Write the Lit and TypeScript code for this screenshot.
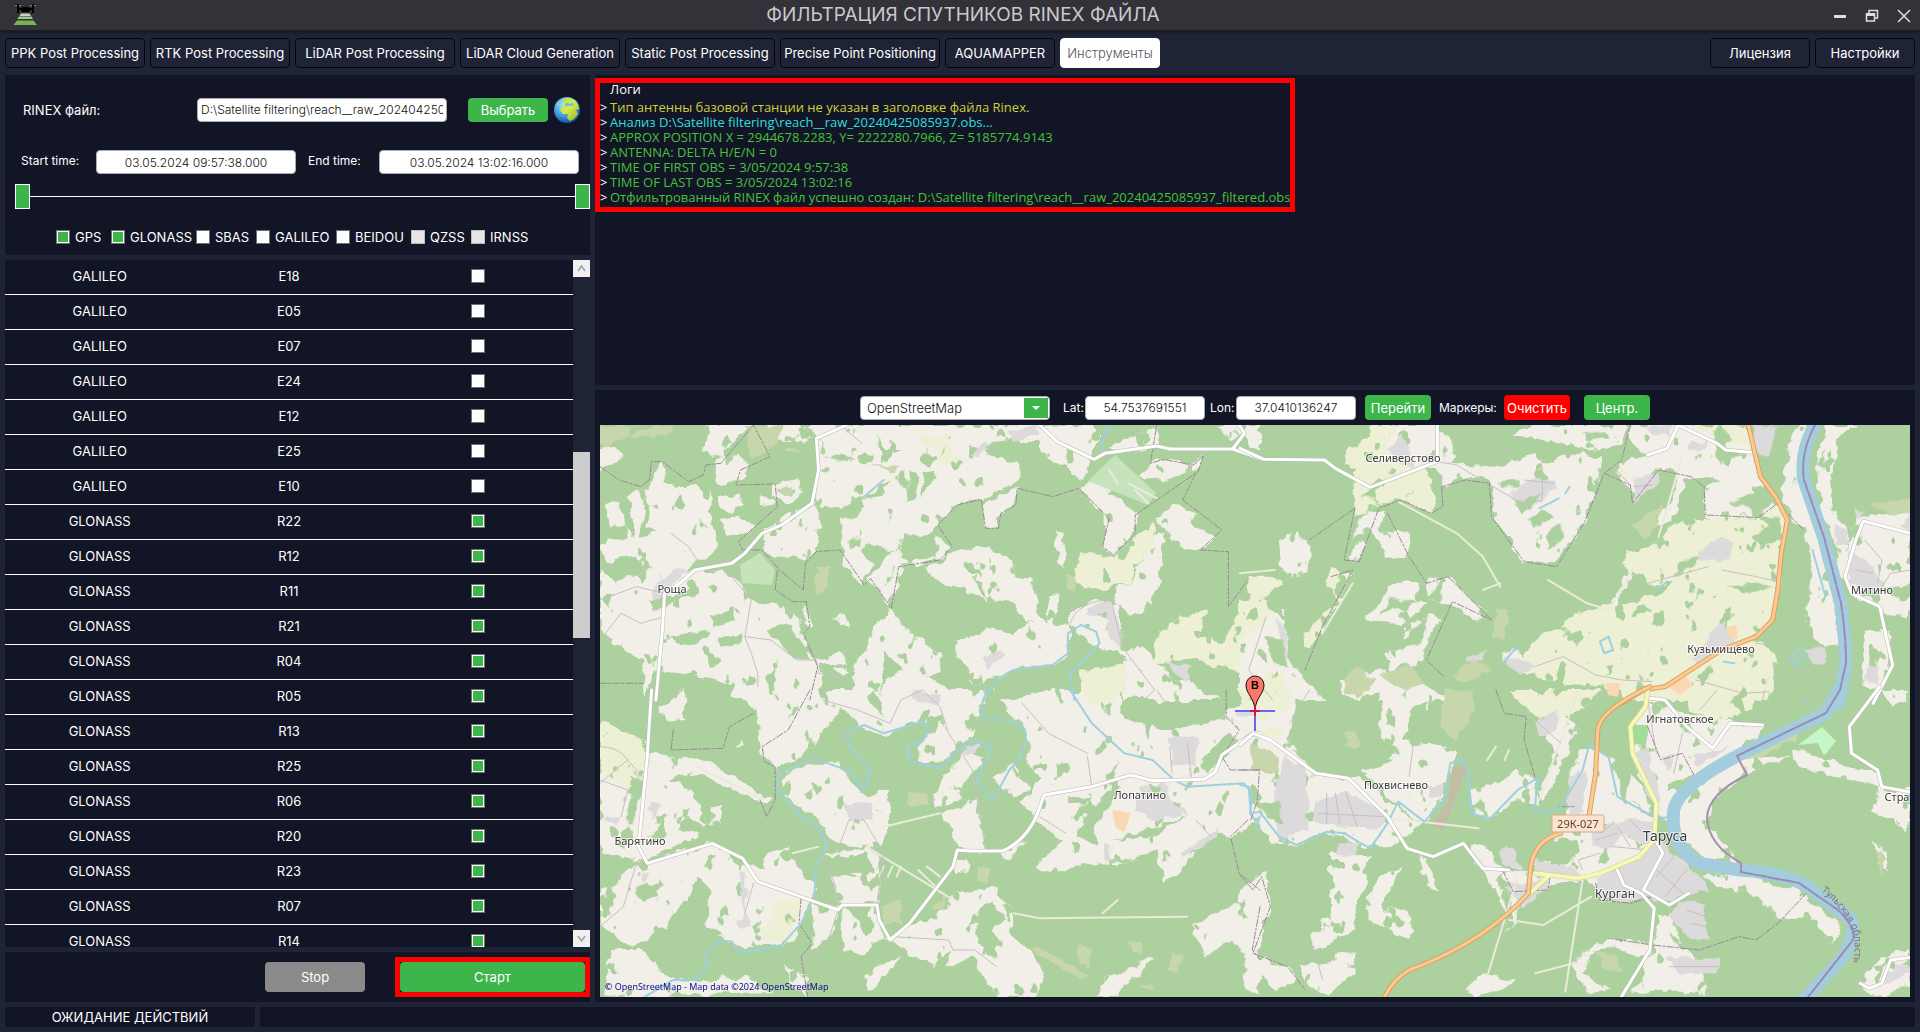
import { LitElement, html, css, svg } from "lit";
import { customElement, state } from "lit/decorators.js";

interface Sheet {
  transform: string;
  land: string;
  farm: string;
  scrub: string;
  built: string;
  wood: string;
  river: string;
  oka?: string;
  track: string;
  ride: string;
  road: string;
  trunk?: string;
  yellow?: string;
  border: string;
}

/* The map is drawn as four adjoining survey sheets, each in its own units. */
const SHEETS: Sheet[] = [
  {
    transform: "translate(-20 -55) scale(.4337 .3333)",
    land: `M46 235L85 230 103 260 60 285 46 300zM290 165L400 165 375 205 330 235 340 255 300 260 285 245 295 200z
      M320 260L370 255 390 290 360 340 340 350 310 330z
      M430 165L960 165 1060 168 1185 165 1200 200 1180 270 1165 320 1120 290 1080 270 1050 215 1010 205 960 215 935 235 955 260 1000 270 1020 320 990 345 930 385 870 400 830 455 820 480 860 540 790 580 740 590 735 520 720 540 668 520 650 540 670 590 650 635 610 580 600 500 600 440 650 440 650 390 700 370 720 330 660 380 600 410 560 415 520 400 545 390 550 250 545 205 480 220 430 200z
      M110 370L160 355 185 280 200 330 240 350 300 360 295 420 305 450 315 520 300 545 250 600 310 600 350 620 395 690 445 700 500 730 520 840 540 870 610 850 620 910 555 880 550 990 350 990 350 930 170 900 150 990 145 880 100 830 70 830 60 780 46 740 46 600 85 640 150 600 130 560 60 570 50 530 110 490 100 470 60 460 60 400 90 385 100 470 130 500z
      M420 490L470 440 540 400 555 440 545 490 550 540 500 570 430 550zM320 380L370 370 375 410 345 430 320 415zM415 370L440 375 450 400 425 410z
      M440 350L500 330 510 370 480 400 455 390zM715 545L735 530 740 600 720 715 665 630zM318 450L360 440 400 460 390 495 340 490z
      M640 890L680 770 718 720 765 800 825 850 830 900 800 925 870 970 860 990 630 990 620 930z
      M800 590L860 550 920 530 970 545 1005 580 1000 620 1040 625 1050 680 1065 740 1030 760 1000 700 960 690 900 665 850 650 810 620z
      M870 810L940 770 1000 790 1060 740 1100 770 1130 760 1125 860 1080 885 1020 890 960 920 920 940 870 870z
      M1000 355L1010 355 1000 400 965 440 960 475 935 475 930 400zM1150 355L1200 320 1220 370 1280 430 1280 490 1230 555 1205 530 1215 440z
      M1285 315L1330 270 1400 280 1438 260 1430 290 1350 330 1300 335zM1210 240L1270 200 1335 170 1330 230 1240 250z
      M1335 440L1380 405 1420 430 1410 460 1460 500 1450 530 1400 540 1350 490zM1270 640L1340 480 1350 520 1330 640 1320 700 1270 740 1230 690 1240 650z
      M1130 730L1190 690 1240 700 1250 780 1250 850 1190 830 1130 760zM1075 680L1105 670 1100 740 1085 780zM1100 510L1110 475 1120 560 1120 600 1100 580z
      M1250 830L1300 840 1380 930 1480 990 1250 990zM1475 165L1530 165 1535 190 1510 215 1480 190zM1540 165H1568V240L1540 235z
      M575 740L610 735 625 770 600 765zM515 700L530 730 530 770 515 765z`,
    farm: `M1150 550L1230 560 1330 450 1330 520 1280 600 1270 640 1170 660 1145 640zM1330 790L1400 740 1440 720 1430 800 1480 820 1568 640V910L1480 890 1430 870 1325 880z
      M1150 900L1250 880 1250 960 1230 990 1155 990zM770 190L840 200 875 260 850 300 820 250z`,
    scrub: `M46 165L120 165 110 200 60 235 46 215zM115 190L180 165 215 170 200 195 120 205zM385 170L470 165 460 210 400 270 390 260zM470 235L500 235 512 250 480 250zM545 585L572 585 568 670 542 675zM455 350L490 350 485 375 460 372zM660 285L735 290 725 310 700 295zM1120 615L1140 620 1145 665 1125 660z`,
    built: `M1170 705L1225 695 1250 800 1245 830 1220 800 1210 730 1170 740zM175 640L230 595 255 600 215 640 180 720 165 715zM900 255L935 220 945 230 920 258zM985 190L1050 165 1060 190 1000 215zM1350 880L1410 885 1400 930 1370 905z
      M925 870L970 840 980 860 935 890z`,
    wood: `M205 800L300 780 290 810 230 820zM300 740L350 720 360 750 310 770zM320 800L375 795 370 820 325 830zM430 780L480 760 520 840 530 870 490 865zM160 695L270 650 280 665 170 720zM150 400L165 405 150 470 175 490 135 500zM685 195L700 240 740 240 690 280zM790 300L820 310 785 390zM760 300L780 305 770 390 755 395zM740 500L820 490 820 560 745 570z
      M910 610L930 640 940 690 920 660zM560 880L610 880 610 890 560 890zM700 840L740 900 700 930 690 980zM1180 850L1240 840 1260 870 1200 900zM1000 890L1110 890 1120 940 1000 990 930 990zM505 440L515 445 500 480zM555 200L570 260 640 260 600 280 560 250z`,
    river: `M1225 165Q1200 200 1205 245M930 990Q950 930 1000 900L1090 885 1125 850 1125 790 1155 765 1190 785 1198 820 1165 870 1130 910 1140 990M655 380L700 330`,
    track: `M330 590L395 690 380 800 395 850 410 910 410 950M46 690L130 650 195 670M46 810L95 730 140 760 195 740M210 490L250 530 270 570 350 580M380 800L440 810 500 870 545 870 550 910 600 920 620 940M1130 760Q1150 690 1225 690L1250 830 1325 960 1300 990M600 165L650 220`,
    ride: `M550 250L545 380M1220 300L1240 340M1265 340L1330 385M1280 360L1310 400M740 590L735 540`,
    road: `M615 165L545 205 550 300 535 400 465 465 420 490 380 550 350 580 265 600 230 640 195 670 190 780 175 990M1060 165L1100 215 1185 268 1210 250 1330 228 1360 237 1505 237 1568 265M1505 237L1532 190 1520 165`,
    border: `M46 290L90 330 140 350 160 330 165 275 190 275 250 335 285 315 290 285 325 280 400 165 438 260 370 300 360 345 450 342 455 410 365 515 375 540 420 540 460 600 515 660 520 580 545 545 600 540 655 645 670 625 718 715 735 590 830 570 858 530 825 465 870 405 925 388 935 475 965 475 970 430 1005 405 1008 355 1090 380 1150 355 1220 445 1205 530 1230 555 1280 490 1280 435 1425 305 1437 258 1415 285 1345 268 1315 280 1330 165M455 600L450 660 490 695 522 695 530 770 515 790 548 890 530 990M1390 390L1480 480 1430 540 1495 545 1495 710 1540 630M46 940H145M1420 310L1390 390`,
  },
  {
    transform: "translate(640 -55) scale(.4337 .3333)",
    land: `M0 165L15 200 50 235 30 215 0 200zM350 165L455 165 470 200 495 215 495 265 470 290 400 280 340 230zM455 280L530 285 560 320 510 330 470 350z
      M530 285L600 290 680 240 700 280 790 250 840 265 820 340 795 455 750 540 720 585 655 575 620 510 580 430 575 340z
      M625 190L660 165 890 165 885 200 850 245 800 235 720 215z
      M900 165L1160 165 1185 245 1200 320 1230 380 1250 430 1190 440 1070 435 1075 350 1100 320 1040 330 960 290 910 400 900 340 860 300 905 260 940 260 900 220z
      M1245 360L1285 165 1310 165 1295 260 1300 360 1350 560 1370 700 1385 830 1340 830 1300 760 1320 620 1300 480 1270 440 1260 400z
      M1350 165L1420 165 1385 200 1360 330 1365 420 1400 480 1400 560 1390 620 1360 480 1335 380 1330 280z
      M1420 440L1545 420 1545 640 1480 660 1545 700V740L1480 720 1400 660 1390 600zM1440 790L1500 780 1500 870 1470 960 1430 950z
      M85 510L130 490 160 560 165 600 120 620 90 590zM290 420L330 430 320 480 390 500 380 560 340 570 325 520 290 480 275 570 250 565z
      M285 740L370 630 410 640 410 680 440 700 370 770zM430 630L480 620 570 730 540 760 490 700 440 680zM380 780L440 730 460 760 430 810 420 870 350 900 330 850 380 830z
      M0 720L100 720 110 860 150 930 200 990 0 990zM230 920L340 900 500 990 230 990zM960 470L1020 300 1030 310 1000 450zM900 600L910 600 860 715 850 710z
      M600 840L650 850 690 900 660 910 610 880z`,
    farm: `M310 165L350 165 340 230 400 280 430 270 430 300 450 400 440 425 370 390 320 400 270 430 258 350 265 300 240 290 245 240 290 205zM1030 165L1170 165 1185 225 1120 215z
      M940 530L1010 450 1110 435 1190 445 1250 400 1262 460 1245 560 1240 660 1225 750 1180 800 1240 850 1220 990 880 990 880 960 690 930 650 850 700 790 800 720 830 710 960 680 1000 640 940 640 880 580 890 540z
      M200 600L260 610 190 790 150 830 145 790 230 690 200 640zM15 620L80 620 95 640 60 690 15 670zM0 690L70 690 60 760 0 800zM60 900L100 900 120 990 60 990zM865 280L900 300 895 320 865 310z`,
    scrub: `M590 715L620 725 610 800 580 810zM235 930L270 890 310 930 280 980 240 970zM320 920L390 880 420 940 380 960zM490 920L540 870 580 900 520 940zM910 465L980 390 940 510zM1450 400L1545 390V430L1480 425z`,
    built: `M905 320L960 310 965 340 910 400zM930 165L1000 165 985 200 950 190zM1180 165L1240 165 1220 260 1190 240zM1040 220L1080 210 1060 250 1035 240zM1405 540L1440 560 1480 640 1470 680 1440 660 1405 640zM1090 780L1115 755 1130 800 1150 830 1110 850 1060 890 1040 870z
      M340 240L370 190 395 250 400 290 370 280zM620 370L660 330 725 325 725 360 695 390 630 392zM1055 545L1110 500 1130 520 1125 570 1060 570zM605 870L645 860 680 890 650 910zM1300 840L1350 830 1350 880 1320 880zM1370 460L1400 480 1400 530 1375 520zM1545 430V480L1520 470z
      M1440 890L1470 885 1470 940 1440 930zM80 740L110 800 110 860 95 850zM520 860L570 845 560 870 520 875zM1415 410L1440 430 1425 445z`,
    wood: `M1250 560L1310 560 1310 700 1280 760 1240 730zM1130 400L1240 330 1250 380 1200 430 1240 440 1250 500 1200 540 1180 500 1220 470 1170 410zM280 380L300 355 315 390zM640 400L700 370 650 430zM660 450L700 420 720 440 680 470zM700 500L740 460 750 500 710 540zM600 340L640 330 640 350 600 350zM470 620L460 700 430 690zM1050 580L1000 620 1010 580 1060 560zM1120 650L1200 640 1230 650 1180 670zM720 960L740 870 755 890 730 985zM320 740L340 690 420 690 380 720 350 710zM400 780L430 740 420 820 360 840z
      M60 800L100 810 110 900 80 880zM790 190L840 180 850 200 800 210zM1100 160L1130 200 1110 290 1090 220z`,
    river: `M830 815L850 800 860 840 840 850zM1270 860L1290 835 1300 860 1280 890zM690 415L735 385M750 370L760 350M605 880L640 830M960 660L985 635M1115 875L1140 880M1320 540L1350 680`,
    oka: `M1325 165Q1290 250 1300 330L1345 500 1385 700Q1395 800 1397 880L1380 1000`,
    track: `M455 275L500 285 570 340 640 393 697 393 697 325M680 890L745 860 820 915 880 930 950 935M1110 600L1190 620 1240 635M940 640L1080 590M1190 820L1270 830 1280 900 1380 915M1050 930L1160 970 1220 965M1475 660L1500 610 1545 600M75 990L20 900 60 740M860 290L900 345M1440 510L1480 570 1470 640M655 330L725 340M910 350L950 345M1420 600L1460 610`,
    ride: `M365 395L500 490 560 560 600 650M0 610L80 600M710 630L800 700M905 600L855 715M600 640L560 660M800 700L850 720M260 640L190 790M1020 260L965 500`,
    road: `M0 235L55 268 195 270 220 295 300 352 455 275 455 165M1010 165L1100 220 1120 240 1190 248M1010 165L985 235 940 255M1545 490L1437 453 1420 510 1395 620 1410 670 1475 710 1490 800 1505 885 1460 1000`,
    trunk: `M1172 165L1200 320 1235 380 1262 450 1248 550 1240 660 1228 750 1190 800 1110 840 980 950 930 960 880 1000`,
    border: `M265 415L160 510M265 415L240 570 275 575 320 415 370 390 440 430 468 410 465 350 520 330 575 340 580 440 655 575 730 590 795 455 840 310 880 270 900 165M840 310L900 345 905 400 965 300 1040 320 1070 350 1073 435 1195 443 1240 400 1300 480M340 430L390 560 430 640 480 620 580 750 490 695 430 870 470 920M210 620L260 600 190 770 150 900`,
  },
  {
    transform: "translate(-20 265) scale(.4337 .3333)",
    land: `M360 0L930 0 925 60 905 140 870 170 830 80 790 90 700 130 650 110 600 60 545 160 510 200 450 240 420 190 400 60z
      M46 230L120 180 300 215 440 325 420 340 270 250 210 260 270 330 300 420 200 480 140 520 46 480z
      M46 560L150 520 305 460 360 520 410 540 480 500 545 600 530 640 490 760 370 780 330 740 280 700 310 600 230 640 200 720 120 770 46 700z
      M70 780L140 780 200 860 280 870 390 860 440 910 60 920zM470 260L540 215 600 215 620 270 660 320 715 290 715 430 690 470 600 470 530 370 470 320z
      M560 500L600 490 670 470 690 500 690 640 600 640 580 560 640 560zM530 640L600 650 580 740 540 770zM610 650L640 700 680 650 700 740 650 790 600 780z
      M775 180L830 100 880 160 830 225 780 200zM820 290L890 180 930 200 900 260 870 330 820 350zM840 370L910 330 935 480 870 480 860 420z
      M950 0L1240 0 1260 80 1360 130 1440 100 1500 60 1568 0V280L1550 400 1500 440 1460 430 1400 520 1350 570 1330 480 1250 520 1200 510 1120 540 1090 550 1050 520 1110 450 1060 400 1020 340 1060 270 1030 200 1030 130z
      M850 620L950 590 1000 660 990 740 1040 770 1070 850 1050 920 960 920 900 800 850 830zM700 740L850 660 850 780 820 830 760 790zM1410 710L1568 600V800L1500 760 1440 790zM1200 880L1330 790 1280 860 1240 920 1200 920z
      M300 350L325 345 320 400 300 395zM360 170L375 150 380 165zM970 490L1030 450 985 505zM420 500L480 470 480 500 430 540zM660 850L700 820 740 800 700 860 660 900zM1520 760L1568 700V920L1540 900z
      M470 830L520 860 530 920 490 890zM865 520L895 510 895 550 870 545zM185 50L240 0 240 90 200 95zM950 260L1000 230 1040 290 1000 320z`,
    farm: `M60 100L155 160 165 220 120 300 46 240 46 100zM450 640L520 620 480 760 415 750zM1160 0L1240 0 1220 50 1180 40z`,
    scrub: `M750 310L800 305 810 345 755 345zM700 650L740 630 740 700 700 705zM810 640L845 620 840 660 815 655zM920 530L950 540 940 580 918 570zM1145 760L1180 780 1175 830 1150 820zM1265 750L1300 750 1300 790 1270 785zM1360 790L1390 790 1380 850 1355 840zM1290 890L1320 880 1320 910zM1040 780L1060 770 1170 855 1160 870zM1545 170H1568V230L1550 235z`,
    built: `M610 340L675 335 675 380 620 390zM1290 290L1350 280 1370 350 1400 370 1320 390 1280 360zM1360 140L1425 140 1420 230 1365 220zM60 375L90 390 85 405 60 390zM160 335L185 345 165 390zM370 540L385 545 380 660 395 710 360 705 375 680zM1210 460L1225 465 1225 510 1212 510zM1380 490L1475 415 1470 440 1390 505zM765 5L830 20 825 45 770 30zM1510 60L1550 65 1550 80 1515 78zM140 540L160 550 150 570z
      M880 180L920 165 920 180 890 195z`,
    wood: `M120 260L150 270 120 400 105 400zM160 440L195 380 200 440 170 460zM220 420L240 370 300 420 260 430zM130 590L155 570 180 610 150 630 130 620zM640 700L660 660 680 700 660 740zM1160 390L1240 270 1250 290 1190 400 1190 470 1150 440zM1430 210L1500 120 1520 160 1470 220 1440 250zM1300 100L1320 90 1310 150zM560 500L620 500 660 490 680 550 570 555zM910 680L950 630 980 690 950 720 960 800 920 760zM680 0L700 90 680 60 660 20zM240 660L270 560 300 600 290 690 250 700zM480 270L475 320 460 300zM1310 280L1340 290 1330 320zM1130 320L1175 325 1165 345 1130 340zM1230 450L1330 410 1400 370 1320 440z
      M46 540L130 500 80 590 46 600z`,
    river: `M940 0Q915 60 935 90Q1010 80 1028 130Q1030 190 990 240L950 335 915 270 940 200 945 165 900 150 850 210 830 235 760 215 755 165 790 155 805 115 790 95 700 130 655 105 615 130 620 165 670 240 655 300 625 245 540 205 460 250 455 300 510 380 550 410 570 470 545 520 540 620 510 700 465 765 370 790 350 755 320 750 285 800 295 830 265 870 215 870 150 920M1130 0L1180 100 1255 190 1320 210 1370 270 1400 290 1530 280 1550 310 1545 370 1568 410`,
    track: `M46 170Q90 170 110 210L150 270M46 280L110 210M95 380L110 300 46 270M130 520L100 650 46 710M400 580L380 670M550 0L560 30 640 60 715 100 740 30 790 0 830 50 850 130 905 240 935 475M560 500L590 590 590 640M600 460L620 390 655 390 700 490 685 640M595 660L570 760 520 830M1060 380L1120 430M1170 200L1180 290M1020 40L1080 130 1170 190M1360 170L1365 250M1400 160L1410 260M1330 0L1360 60 1370 130M1420 390L1455 440M720 740L850 750 860 780 910 780 960 830`,
    ride: `M270 230L425 330M660 470L855 625M1000 670L1060 685 1400 680M1205 670L1240 630M700 410L830 370M490 490L550 470M800 530L830 560M780 540L820 590M700 530L690 560M720 530L710 560M740 530L730 560`,
    road: `M165 0L155 200 135 470 155 520 305 460 375 505 410 575 520 625 595 660 605 645 685 645 690 690 715 750 760 700 860 530 870 480 900 483 975 483Q1030 450 1055 370L1070 315 1180 290 1270 255 1320 272 1440 268 1465 245 1480 195 1545 135 1568 130`,
    border: `M530 0L480 120 420 170 425 215 450 230 450 330 430 380 415 330M215 120L210 180 330 175 345 110 400 70M510 620L505 700 535 760 510 800 525 920M1490 0L1490 80 1520 120 1480 200 1500 240 1568 240M1540 390L1500 440 1520 550 1568 600M1568 650L1550 780 1568 810`,
  },
  {
    transform: "translate(640 265) scale(.4337 .3333)",
    land: `M0 140L100 160 180 250 280 270 350 340 420 400 350 470 300 475 200 430 130 470 70 450 30 400 0 330zM20 0L150 0 110 120 130 180 40 150 0 130V20z
      M330 20L460 0 400 130 430 160 500 190 485 220 470 320 420 395 360 340 300 260 270 240 370 190 320 140z
      M530 300L600 280 640 230 680 270 690 350 640 330 570 390 540 370zM720 440L760 350 760 240 800 170 860 200 880 320 960 390 960 450 1000 520 900 560 850 600 790 570 700 600 640 620 600 540 650 540 690 560 700 520 780 510 770 450z
      M700 100L740 50 780 120 750 200 700 330 690 300 720 220zM940 30L1040 80 1170 100 1210 110 1150 180 1060 260 1000 340 990 400 960 350 910 240 900 120z
      M1060 280L1150 200 1270 200 1240 215 1170 250 1090 330 1080 400 1150 520 1070 500 1000 440 1000 340zM1275 180L1400 225 1460 240 1490 300 1545 300V420L1460 365 1470 290 1350 260 1280 220z
      M1060 560L1150 545 1290 600 1380 700 1370 760 1330 700 1230 680 1200 620 1110 590zM960 670L1000 670 1010 760 1070 840 1080 905 900 905 950 780zM1460 450L1490 490 1500 540 1475 520z
      M1440 850L1500 780 1545 770V870L1480 920 1430 900zM0 600L60 540 70 680 0 740zM20 820L60 800 130 860 80 900zM210 480L300 500 260 720 180 740 210 650zM290 650L320 560 370 530 340 640 395 680 390 750 310 700z
      M420 500L465 600 450 600 410 540zM140 830L270 790 270 840 200 920 150 880zM520 900L560 850 640 870 600 900 550 920zM770 820L850 740 940 760 940 800 850 770 800 800 790 850 850 900 800 905zM530 480L560 470 600 530 600 600 640 610 640 700 610 720 600 620 560 540z
      M160 730L250 690 200 780 160 780zM1370 820L1400 780 1350 880 1340 910zM1480 0H1545V20L1500 60zM900 250L930 300 950 370 890 330z`,
    farm: `M0 0L130 0 110 60 60 90 0 60zM1030 0L1210 0 1180 60 1100 100 1040 70zM620 0L830 0 800 50 740 80 690 90zM20 110L60 120 110 110 90 150 40 150z`,
    scrub: `M470 0L530 0 540 60 500 150 460 110zM245 110L275 105 270 170 245 175zM25 160L90 200 80 250 30 240zM820 780L870 800 880 840 840 830zM1150 210L1290 120 1280 150 1180 210zM1465 480L1485 500 1480 570z`,
    built: `M100 200L150 230 160 420 90 450 75 350zM170 340L240 305 340 370 320 420 170 400zM815 420L900 380 950 400 960 450 1050 540 1080 600 1010 620 990 640 940 620 880 640 820 610 820 570 870 520 910 500 940 470 880 430 850 480 810 460zM670 510L770 530 780 560 680 555zM1010 630L1070 640 1080 750 1030 740 990 680zM980 800L1100 810 1100 850 1020 850z
      M910 190L940 170 970 340 940 320zM680 90L730 60 730 120 690 140zM970 200L1000 190 990 240zM600 480L630 470 650 540 610 530zM600 590L710 560 710 590 650 655 630 600zM230 460L270 460 270 500 220 490zM440 290L465 285 460 320 440 315zM760 260L800 240 790 370 760 370zM1040 200L1130 170 1060 230zM0 60L40 60 30 80 0 78z
      M1480 860L1510 820 1545 830V850L1490 880z`,
    wood: `M50 340L90 330 100 400 60 380zM200 60L330 0 310 110 240 130zM390 60L430 40 420 170 380 150zM900 105L940 105 935 165 897 160zM990 280L1050 255 1040 280 985 300zM330 620L370 550 360 640 330 670zM215 510L240 510 240 535 215 535zM720 490L740 500 735 530 715 525zM430 440L470 430 460 465 430 460zM530 350L560 330 570 370zM150 210L290 190 360 210 290 240 160 240z`,
    river: `M0 285L20 290 25 370 45 365 90 440 130 465 200 425 240 430 300 475 340 400 365 335 425 395 470 330 485 220 510 205 525 240 535 370 575 388 640 300 685 265 680 365 735 360 790 240 805 165 850 200 870 320 960 385 1000 380M1295 30L1305 35M155 160L158 165M45 380L40 410`,
    oka: `M1385 -10L1350 70 1150 195Q1010 290 1000 360Q990 470 1060 520L1150 540Q1280 550 1330 610L1410 690Q1420 770 1370 830L1300 930`,
    track: `M1000 250L1020 130M940 30L960 190M1060 60L1100 0M1190 110L1210 0M115 100L160 0M200 310L200 400M220 310L230 400M245 310L270 410M180 370L330 380M960 540L1030 620M1000 500L960 560M1030 540L980 620M870 410L900 470M900 390L930 430M860 470L940 480M1030 660L1075 680M1040 700L1075 710M990 830L1100 830M680 90L740 160M830 430L860 400M820 450L870 430M400 160L390 260M790 540L780 510 830 490M80 740L170 770 190 870`,
    ride: `M780 0L690 330M640 560L570 860M620 690L700 705 810 620M790 570L750 905M770 820L680 850M345 385L550 415M560 520L530 480M590 170L570 210M620 180L610 210`,
    road: `M0 165L30 130 70 150 175 250 250 265 340 380 385 475 445 500 515 460 560 535 620 540M945 25L980 30 1030 110 1090 175 1130 100 1205 105M870 540L885 585 925 610 955 655 945 780 875 930M960 455L975 490 930 600 990 645 1035 610M1475 -10L1405 110 1410 190 1470 240 1480 290 1560 310M1430 880L1450 895 1480 880 1500 810 1560 800`,
    trunk: `M945 -10Q830 60 825 120L820 250 805 375M740 430Q680 450 670 530L665 610Q560 760 390 840Q350 870 330 930`,
    yellow: `M940 0L935 50 900 110 905 190 960 340 955 450 920 500 830 550 780 565 680 550M710 560L660 620`,
    border: `M590 0L610 70 660 80 655 150 680 260M1310 605L1240 700 1190 750 1150 740 1060 780 950 765 850 745M0 555L30 600 50 560 70 650 30 790 110 830 150 900M940 110L970 210 1020 190 1055 275M0 240L45 240 40 330 25 390M735 350L770 350M605 540L630 605 710 600 715 560M820 580L830 630 900 640 950 620M1060 270L1145 210`,
  },
];

const PLACES: [string, number, number, number][] = [
  ["Роща", 72, 168, 11],
  ["Селиверстово", 803, 37, 11],
  ["Митино", 1272, 169, 11],
  ["Кузьмищево", 1121, 228, 11],
  ["Игнатовское", 1080, 298, 11],
  ["Похвиснево", 796, 364, 11],
  ["Лопатино", 540, 374, 11],
  ["Барятино", 40, 420, 11],
  ["Таруса", 1065, 416, 14],
  ["Курган", 1015, 473, 12],
  ["Стра", 1297, 376, 11],
];

@customElement("survey-map")
export class SurveyMap extends LitElement {
  static styles = css`
    :host { display: block; position: relative; overflow: hidden; background: #add19e; }
    .canvas { display: block; width: 100%; height: 100%; }
    path { vector-effect: non-scaling-stroke; }
    .land { fill: #f2efe9; }
    .farm { fill: #eef0d5; }
    .scrub { fill: #c8d7ab; }
    .built { fill: #dcdada; }
    .wood { fill: #add19e; }
    .line { fill: none; stroke-linejoin: round; stroke-linecap: round; }
    .river { stroke: #9fd0df; stroke-width: 2; fill: none; }
    .oka { stroke: #a3cddd; stroke-width: 13; }
    .okaline { stroke: #9a8bb5; stroke-width: 2; stroke-dasharray: 12 2; }
    .track { stroke: #c5bfc1; stroke-width: 1; }
    .ride { stroke: #e9ebdc; stroke-width: 2; }
    .casing { stroke: #bcb8b4; stroke-width: 4; }
    .road { stroke: #ffffff; stroke-width: 3; }
    .trunkcase { stroke: #d9a066; stroke-width: 5; }
    .trunk { stroke: #fbcb90; stroke-width: 3; }
    .yellowcase { stroke: #c9cc94; stroke-width: 5; }
    .yellow { stroke: #f6f8b4; stroke-width: 4; }
    .border { stroke: #9a8898; stroke-width: 1; stroke-dasharray: 7 2 2 2; }
    .limit { stroke: #a98fb0; stroke-width: 2; }
    .place { font-family: "Noto Sans", sans-serif; fill: #3c3c3c; stroke: rgba(255, 255, 255, 0.7); stroke-width: 2; paint-order: stroke; text-anchor: middle; }
    .region { font-family: "Noto Sans", sans-serif; font-size: 10px; fill: #80708c; }
    .shield { fill: #f8e4cf; stroke: #dba98c; }
    .shieldtext { font-family: "Noto Sans", sans-serif; font-size: 11px; fill: #5c4630; text-anchor: middle; }
    .pinletter { font-family: "Liberation Sans", sans-serif; font-size: 11px; font-weight: 700; text-anchor: middle; }
    .credit { position: absolute; left: 5px; bottom: 3px; font: 9px/15px "Open Sans", sans-serif; color: #00008b; white-space: nowrap; }
  `;

  private sheetLand(s: Sheet) {
    return svg`<g transform=${s.transform}>
      <path class="land" d=${s.land}></path><path class="farm" d=${s.farm}></path>
    </g>`;
  }

  private sheetCover(s: Sheet) {
    return svg`<g transform=${s.transform}>
      <path class="scrub" d=${s.scrub}></path><path class="built" d=${s.built}></path><path class="wood" d=${s.wood}></path>
    </g>`;
  }

  private sheetLines(s: Sheet) {
    return svg`<g transform=${s.transform}>
      <path class="line ride" d=${s.ride}></path><path class="line track" d=${s.track}></path>
      <path class="line border" d=${s.border}></path><path class="line river" d=${s.river}></path>
      <path class="line oka" d=${s.oka ?? ""}></path>
      <path class="line casing" d=${s.road}></path><path class="line road" d=${s.road}></path>
      <path class="line yellowcase" d=${s.yellow ?? ""}></path><path class="line yellow" d=${s.yellow ?? ""}></path>
      <path class="line trunkcase" d=${s.trunk ?? ""}></path><path class="line trunk" d=${s.trunk ?? ""}></path>
    </g>`;
  }

  render() {
    return html`
      <svg class="canvas" viewBox="0 0 1310 572" preserveAspectRatio="xMidYMid slice" role="img" aria-label="OpenStreetMap">
        <defs>
          <filter id="coast" filterUnits="userSpaceOnUse" x="0" y="0" width="1310" height="572" color-interpolation-filters="sRGB">
            <feTurbulence type="fractalNoise" baseFrequency=".06" numOctaves="3" seed="7" result="n"></feTurbulence>
            <feDisplacementMap in="SourceGraphic" in2="n" scale="14" xChannelSelector="R" yChannelSelector="G" result="shape"></feDisplacementMap>
            <feTurbulence type="fractalNoise" baseFrequency=".06 .045" numOctaves="3" seed="21" result="m"></feTurbulence>
            <feColorMatrix in="m" values="0 0 0 0 .678  0 0 0 0 .82  0 0 0 0 .62  26 0 0 0 -17.2" result="groves"></feColorMatrix>
            <feComposite in="groves" in2="shape" operator="in" result="inside"></feComposite>
            <feMerge><feMergeNode in="shape"></feMergeNode><feMergeNode in="inside"></feMergeNode></feMerge>
          </filter>
          <filter id="edge" filterUnits="userSpaceOnUse" x="0" y="0" width="1310" height="572" color-interpolation-filters="sRGB">
            <feTurbulence type="fractalNoise" baseFrequency=".08" numOctaves="2" seed="3" result="n"></feTurbulence>
            <feDisplacementMap in="SourceGraphic" in2="n" scale="10" xChannelSelector="R" yChannelSelector="G"></feDisplacementMap>
          </filter>
          <path id="regionline" d="M1221 466Q1248 488 1254 510Q1256 526 1252 548"></path>
        </defs>
        <g filter="url(#coast)">${SHEETS.map((s) => this.sheetLand(s))}</g>
        <g filter="url(#edge)">${SHEETS.map((s) => this.sheetCover(s))}</g>
        <path d="M140 140L160 128 175 145 172 160 142 158zM488 56L515 30 556 68 548 80z" fill="#c6e3bb"></path>
        <path d="M1198 320L1222 302 1236 316 1224 331 1218 318z" fill="#c4f7c8"></path>
        <path d="M1034 300L1048 300 1046 320 1030 318z" fill="#a2dc98"></path>
        <path d="M852 342L868 340 856 372 843 406 830 400 848 378z" fill="#c3bda5"></path>
        <path d="M512 385L531 388 524 407 516 403zM1068 262L1085 250 1093 260 1080 270zM1006 258L1020 258 1018 272 1008 270zM1126 202L1136 200 1138 214 1130 214z" fill="#fad8b4"></path>
        ${SHEETS.map((s) => this.sheetLines(s))}
        <path class="line okaline" d="M1215 0Q1200 28 1204 55L1224 112 1241 178Q1246 212 1246 238L1240 265 1226 288 1137 331"></path>
        <path class="line limit" d="M1137 331L1147 350Q1109 368 1107 392Q1108 420 1141 438V447"></path>
        <path class="line okaline" d="M1141 447L1199 458 1238 485Q1256 502 1253 515L1208 572"></path>
        ${PLACES.map(([name, x, y, size]) => svg`<text class="place" x=${x} y=${y} font-size=${size}>${name}</text>`)}
        <text class="region"><textPath href="#regionline">Тульская область</textPath></text>
        <rect class="shield" x="952" y="390" width="52" height="17" rx="1"></rect>
        <text class="shieldtext" x="978" y="403">29К-027</text>
        <path d="M655 285C654 272 646 269 646 260A9 9 0 0 1 664 260C664 269 656 272 655 285z" fill="#fd7567" stroke="#1a0a08"></path>
        <text class="pinletter" x="655" y="264">B</text>
        <path d="M635 286H675M655 286V306" stroke="#6a66f4" stroke-width="2"></path>
        <path d="M650 286H660M655 281V291" stroke="#c8145a" stroke-width="2"></path>
      </svg>
      <span class="credit">© OpenStreetMap - Map data ©2024 OpenStreetMap</span>
    `;
  }
}

const TABS: [string, string][] = [
  ["PPK Post Processing", "w140"],
  ["RTK Post Processing", "w140"],
  ["LiDAR Post Processing", "w160"],
  ["LiDAR Cloud Generation", "w160"],
  ["Static Post Processing", "w150"],
  ["Precise Point Positioning", "w160"],
  ["AQUAMAPPER", "w110"],
  ["Инструменты", "w100"],
];

const LOGS: [string, string][] = [
  ["warn", "Тип антенны базовой станции не указан в заголовке файла Rinex."],
  ["info", "Анализ D:\\Satellite filtering\\reach__raw_20240425085937.obs..."],
  ["ok", "APPROX POSITION X = 2944678.2283, Y= 2222280.7966, Z= 5185774.9143"],
  ["ok", "ANTENNA: DELTA H/E/N = 0"],
  ["ok", "TIME OF FIRST OBS = 3/05/2024 9:57:38"],
  ["ok", "TIME OF LAST OBS = 3/05/2024 13:02:16"],
  ["ok", "Отфильтрованный RINEX файл успешно создан: D:\\Satellite filtering\\reach__raw_20240425085937_filtered.obs"],
];

const SYSTEMS = [
  { name: "GPS", on: true, off: false, w: "s55" },
  { name: "GLONASS", on: true, off: false, w: "s85" },
  { name: "SBAS", on: false, off: false, w: "s60" },
  { name: "GALILEO", on: false, off: false, w: "s80" },
  { name: "BEIDOU", on: false, off: false, w: "s75" },
  { name: "QZSS", on: false, off: true, w: "s60" },
  { name: "IRNSS", on: false, off: true, w: "s60" },
];

@customElement("app-root")
export class AppRoot extends LitElement {
  @state() private sats = [
    ..."E18 E05 E07 E24 E12 E25 E10".split(" ").map((id) => ({ id, system: "GALILEO", on: false })),
    ..."R22 R12 R11 R21 R04 R05 R13 R25 R06 R20 R23 R07 R14".split(" ").map((id) => ({ id, system: "GLONASS", on: true })),
  ];

  static styles = css`
    :host { display: flex; flex-direction: column; height: 100vh; min-width: 1200px; overflow: hidden; background: #1f2336; color: #ffffff; font: 13px/16px Inter, "Noto Sans", sans-serif; }
    * { box-sizing: border-box; }
    button, input, select { font: inherit; color: inherit; margin: 0; }
    button { padding: 0; border: 0; cursor: pointer; white-space: nowrap; }

    .title { display: grid; grid-template-columns: 1fr auto 1fr; align-items: center; flex: none; height: 31px; padding: 0 6px 0 12px; background: #323238; border-bottom: 1px solid #1d1d24; box-shadow: 0 1px 3px #15171f; }
    .title h1 { margin: 0; font-size: 19px; line-height: 28px; font-weight: 400; color: #c9c9cd; }
    .logo { display: block; width: 26px; height: 24px; }
    .window { display: flex; justify-content: flex-end; gap: 12px; }
    .window button { width: 20px; height: 20px; background: none; }
    .window svg { display: block; width: 20px; height: 20px; }

    .nav { display: flex; flex: none; gap: 5px; padding: 7px 5px; }
    .tab { height: 30px; border: 1px solid #05060c; border-radius: 4px; background: #1f2336; flex: none; }
    .tab.active { background: #ffffff; color: #55555c; border-color: #ffffff; font-weight: 300; }
    .gap { flex: 1; }
    .w100 { width: 100px; } .w110 { width: 110px; } .w140 { width: 140px; } .w150 { width: 150px; } .w160 { width: 160px; }

    .main { display: grid; grid-template-columns: 585px minmax(0, 1fr); gap: 5px; flex: 1; min-height: 0; padding: 0 5px; }
    .col { display: flex; flex-direction: column; gap: 5px; min-height: 0; }
    .panel { background: #121526; }

    .setup { flex: none; height: 180px; padding: 20px 0 8px 16px; display: flex; flex-direction: column; }
    .file { display: flex; align-items: center; height: 30px; }
    .file label { width: 176px; padding-left: 2px; }
    .box { height: 24px; border: 1px solid #a9abb3; border-radius: 4px; background: #ffffff; color: #111111; font-size: 12px; font-weight: 300; text-align: center; padding: 0 3px; }
    .file .box { width: 250px; text-align: left; }
    .green { background: #3cb64b; border-radius: 4px; }
    .pick { width: 80px; height: 24px; margin-left: 21px; }
    .globe { width: 28px; height: 28px; margin-left: 5px; background: none; }
    .globe svg { display: block; width: 28px; height: 28px; }
    .times { display: flex; align-items: center; margin-top: 25px; height: 26px; font-size: 12px; }
    .times .box { width: 200px; }
    .times label { width: 75px; padding-bottom: 3px; }
    .times .end { width: 83px; padding-left: 12px; }
    .range { display: grid; height: 27px; margin: 8px 0 0; background: linear-gradient(#ffffff, #ffffff) center / 100% 1px no-repeat; width: calc(100% + 6px); margin-left: -6px; }
    .range input { grid-area: 1 / 1; width: 100%; height: 27px; appearance: none; background: none; pointer-events: none; }
    .range input::-webkit-slider-thumb { appearance: none; width: 15px; height: 25px; background: #3cb64b; border: 1px solid #ffffff; pointer-events: auto; }
    .systems { display: flex; margin: 17px 0 0 35px; }
    .systems label { display: flex; align-items: center; gap: 5px; height: 20px; }
    .s55 { width: 55px; } .s60 { width: 60px; } .s75 { width: 75px; } .s80 { width: 80px; } .s85 { width: 85px; }
    .check { appearance: none; display: block; flex: none; width: 14px; height: 14px; border: 1px solid #707070; background: #ffffff; }
    .check:checked { background: #3cb64b; box-shadow: inset 0 0 0 1px #ffffff; }
    .check:disabled { background: #e6e6e6; border-color: #bcbcbc; }

    .list { display: grid; grid-template-columns: minmax(0, 1fr) 17px; flex: 1; min-height: 0; overflow: hidden; }
    .rows { overflow: hidden; min-height: 0; }
    table { width: 100%; border-collapse: separate; border-spacing: 0; table-layout: fixed; }
    td { height: 35px; padding: 0 0 3px; text-align: center; border-bottom: 1px solid #ffffff; }
    td .check { margin: 0 auto; }
    .bar { display: flex; flex-direction: column; background: #1f2336; min-height: 0; }
    .bar button { flex: none; height: 17px; background: #f0f0f0; }
    .bar svg { display: block; width: 17px; height: 17px; }
    .before { flex: 175; } .thumb { flex: 186; background: #cdcdcd; } .after { flex: 292; }

    .actions { display: flex; flex: none; align-items: center; justify-content: flex-end; gap: 30px; height: 50px; }
    .stop { width: 100px; height: 30px; border-radius: 4px; background: #8a8a8a; }
    .mark { border: 5px solid #ff0000; }
    .start { display: block; width: 185px; height: 30px; }

    .logs { flex: none; height: 310px; padding-top: 3px; overflow: hidden; }
    .logbox { width: fit-content; height: 134px; font-family: "Open Sans", sans-serif; }
    .logbox h2 { margin: 0 0 5px 10px; font-size: 13px; line-height: 12px; font-weight: 400; }
    .logbox ul { margin: 0; padding: 0; list-style: none; line-height: 15px; }
    .logbox li { display: flex; white-space: nowrap; }
    .logbox li::before { content: ">"; width: 10px; flex: none; }
    .warn { color: #cdd23a; } .info { color: #30dfe0; } .ok { color: #48c13c; }

    .mapper { display: flex; flex-direction: column; flex: 1; min-height: 0; padding: 0 5px 5px; }
    .tools { display: flex; align-items: center; justify-content: center; flex: none; height: 35px; font-size: 12px; }
    .tools .box { width: 120px; }
    .tools button { width: 66px; height: 25px; font-size: 13px; }
    .select { position: relative; width: 190px; margin-right: 13px; }
    .select select { display: block; width: 190px; height: 24px; padding: 0 30px 0 6px; border: 1px solid #a9abb3; border-radius: 4px; appearance: none; background: #ffffff; color: #111111; font-size: 13px; font-weight: 300; }
    .select svg { position: absolute; right: 2px; top: 2px; width: 24px; height: 20px; pointer-events: none; }
    .tools label { width: 22px; }
    .tools .lon { width: 26px; margin-left: 5px; }
    .go { margin-left: 9px; }
    .tools .cap { width: 65px; margin-left: 8px; }
    .clear { border-radius: 4px; background: #ff0000; }
    .center { margin-left: 14px; }
    survey-map { flex: 1; min-height: 0; }

    .status { display: grid; grid-template-columns: 250px minmax(0, 1fr); gap: 5px; flex: none; padding: 5px; }
    .status div { height: 20px; line-height: 20px; text-align: center; }
  `;

  private toggle(i: number) {
    this.sats = this.sats.map((s, k) => (k === i ? { ...s, on: !s.on } : s));
  }

  render() {
    return html`
      <header class="title">
        <svg class="logo" viewBox="0 0 26 24" aria-hidden="true">
          <path d="M3 2.500H9M18 2.500H24" stroke="#8a8a8e" stroke-width="1"></path>
          <path d="M3 1.500H8M19 1.500H24" stroke="#111" stroke-width="1"></path>
          <path d="M5 2H7V5H9L11 4H16L18 5H20V2H22V10H20V7H18L17 9H10L9 7H7V10H5z" fill="#000"></path>
          <path d="M9 10.500H17.500L19 13H7.500z" fill="#c3d9b6"></path><path d="M7 13.500H19.500L21 16H5.500z" fill="#a3c88c"></path><path d="M5 17.500H21.500L25 22H1.500z" fill="#78b453"></path>
        </svg>
        <h1>ФИЛЬТРАЦИЯ СПУТНИКОВ RINEX ФАЙЛА</h1>
        <div class="window">
          <button aria-label="Свернуть"><svg viewBox="0 0 20 20"><path d="M4 11.500H16" stroke="#dedee2" stroke-width="3"></path></svg></button>
          <button aria-label="Восстановить"><svg viewBox="0 0 20 20" fill="none" stroke="#dedee2" stroke-width="1.500"><path d="M7 8V5.500H15.500V13H13"></path><path d="M4.500 9H12.500V16H4.500z" ></path><path d="M4 9.500H13" stroke-width="3"></path></svg></button>
          <button aria-label="Закрыть"><svg viewBox="0 0 20 20"><path d="M4 5L16 17M16 5L4 17" stroke="#dedee2" stroke-width="1.500"></path></svg></button>
        </div>
      </header>
      <nav class="nav">
        ${TABS.map(([name, w], i) => html`<button class="tab ${w} ${i === 7 ? "active" : ""}">${name}</button>`)}
        <span class="gap"></span>
        <button class="tab w100">Лицензия</button>
        <button class="tab w100">Настройки</button>
      </nav>
      <main class="main">
        <div class="col">
          <section class="panel setup">
            <div class="file">
              <label for="file">RINEX файл:</label>
              <input class="box" id="file" type="text" value="D:\\Satellite filtering\\reach__raw_20240425085937.obs">
              <button class="green pick">Выбрать</button>
              <button class="globe" aria-label="Карта">
                <svg viewBox="0 0 28 28">
                  <defs><radialGradient id="sea" cx=".4" cy=".3" r=".75"><stop offset="0" stop-color="#b4ecff"></stop><stop offset=".5" stop-color="#49a6ea"></stop><stop offset="1" stop-color="#12479a"></stop></radialGradient>
                  <linearGradient id="soil" x2="1" y2="1"><stop offset="0" stop-color="#a8d658"></stop><stop offset=".5" stop-color="#d8ea4c"></stop><stop offset="1" stop-color="#8fb526"></stop></linearGradient></defs>
                  <circle cx="14" cy="14" r="13" fill="url(#sea)"></circle>
                  <path d="M9 4Q13 1 18 2L23 5 25 9 26 13 23 14 25 18 21 23 17 25 14 22 15 18 10 18 7 14 9 10 12 8zM3 9L6 6 5 10z" fill="url(#soil)"></path>
                  <path d="M12 8L15 7 17 8 20 7 21 9 17 10 13 10z" fill="#65bfe0"></path>
                </svg>
              </button>
            </div>
            <div class="times">
              <label for="t0">Start time:</label><input class="box" id="t0" type="text" value="03.05.2024 09:57:38.000">
              <label class="end" for="t1">End time:</label><input class="box" id="t1" type="text" value="03.05.2024 13:02:16.000">
            </div>
            <div class="range">
              <input type="range" aria-label="Start time" min="0" max="100" value="0">
              <input type="range" aria-label="End time" min="0" max="100" value="100">
            </div>
            <div class="systems">
              ${SYSTEMS.map((s) => html`<label class=${s.w}><input class="check" type="checkbox" ?checked=${s.on} ?disabled=${s.off}>${s.name}</label>`)}
            </div>
          </section>
          <section class="panel list">
            <div class="rows">
              <table>
                <tbody>
                  ${this.sats.map((s, i) => html`<tr><td>${s.system}</td><td>${s.id}</td><td><input class="check" type="checkbox" aria-label=${s.id} .checked=${s.on} @change=${() => this.toggle(i)}></td></tr>`)}
                </tbody>
              </table>
            </div>
            <div class="bar">
              <button aria-label="Вверх"><svg viewBox="0 0 17 17"><path d="M5 11L8.500 6 12 11" fill="none" stroke="#a0a0a0" stroke-width="1.500"></path></svg></button>
              <span class="before"></span><span class="thumb"></span><span class="after"></span>
              <button aria-label="Вниз"><svg viewBox="0 0 17 17"><path d="M5 6L8.500 11 12 6" fill="none" stroke="#a0a0a0" stroke-width="1.500"></path></svg></button>
            </div>
          </section>
          <section class="panel actions">
            <button class="stop">Stop</button>
            <div class="mark"><button class="green start">Старт</button></div>
          </section>
        </div>
        <div class="col">
          <section class="panel logs">
            <div class="mark logbox">
              <h2>Логи</h2>
              <ul>${LOGS.map(([kind, text]) => html`<li><span class=${kind}>${text}</span></li>`)}</ul>
            </div>
          </section>
          <section class="panel mapper">
            <div class="tools">
              <div class="select">
                <select aria-label="Карта"><option>OpenStreetMap</option></select>
                <svg viewBox="0 0 24 20"><path d="M0 0H24V20H0z" fill="#3cb64b"></path><path d="M8 8H16L12 12z" fill="#fff"></path></svg>
              </div>
              <label for="lat">Lat:</label><input class="box" id="lat" type="text" value="54.7537691551">
              <label class="lon" for="lon">Lon:</label><input class="box" id="lon" type="text" value="37.0410136247">
              <button class="green go">Перейти</button>
              <span class="cap">Маркеры:</span>
              <button class="clear">Очистить</button>
              <button class="green center">Центр.</button>
            </div>
            <survey-map></survey-map>
          </section>
        </div>
      </main>
      <footer class="status"><div class="panel">ОЖИДАНИЕ ДЕЙСТВИЙ</div><div class="panel"></div></footer>
    `;
  }
}
